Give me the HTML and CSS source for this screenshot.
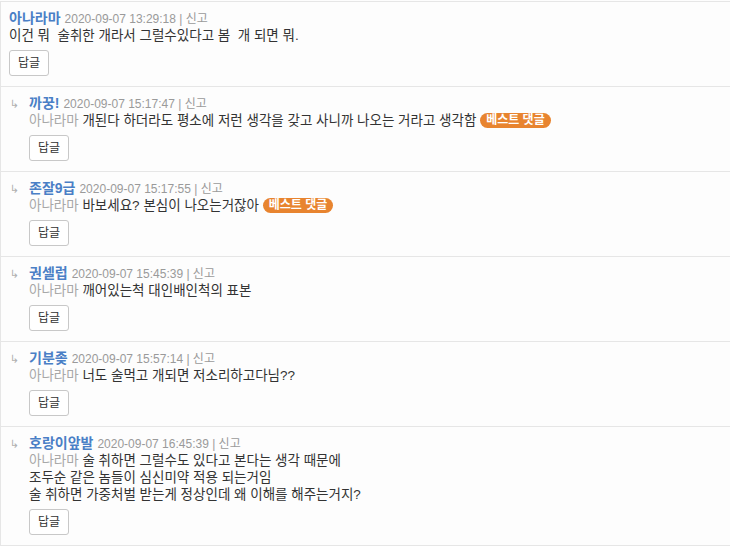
FILE: index.html
```html
<!DOCTYPE html>
<html lang="ko">
<head>
<meta charset="utf-8">
<title>댓글</title>
<link rel="stylesheet" href="styles.css">
</head>
<body>
<div class="comments">
  <div class="item">
    <div class="content">
      <div class="head"><span class="name">아나라마</span> <span class="meta">2020-09-07 13:29:18 | 신고</span></div>
      <div class="text">이건 뭐&nbsp; 술취한 개라서 그럴수있다고 봄&nbsp; 개 되면 뭐.</div>
      <button class="reply-btn">답글</button>
    </div>
  </div>
  <div class="item reply">
    <span class="arrow">↳</span>
    <div class="content">
      <div class="head"><span class="name">까꿍!</span> <span class="meta">2020-09-07 15:17:47 | 신고</span></div>
      <div class="text"><span class="to">아나라마</span> 개된다 하더라도 평소에 저런 생각을 갖고 사니까 나오는 거라고 생각함 <span class="badge">베스트 댓글</span></div>
      <button class="reply-btn">답글</button>
    </div>
  </div>
  <div class="item reply">
    <span class="arrow">↳</span>
    <div class="content">
      <div class="head"><span class="name">존잘9급</span> <span class="meta">2020-09-07 15:17:55 | 신고</span></div>
      <div class="text"><span class="to">아나라마</span> 바보세요? 본심이 나오는거잖아 <span class="badge">베스트 댓글</span></div>
      <button class="reply-btn">답글</button>
    </div>
  </div>
  <div class="item reply">
    <span class="arrow">↳</span>
    <div class="content">
      <div class="head"><span class="name">권셀럽</span> <span class="meta">2020-09-07 15:45:39 | 신고</span></div>
      <div class="text"><span class="to">아나라마</span> 깨어있는척 대인배인척의 표본</div>
      <button class="reply-btn">답글</button>
    </div>
  </div>
  <div class="item reply">
    <span class="arrow">↳</span>
    <div class="content">
      <div class="head"><span class="name">기분좆</span> <span class="meta">2020-09-07 15:57:14 | 신고</span></div>
      <div class="text"><span class="to">아나라마</span> 너도 술먹고 개되면 저소리하고다님??</div>
      <button class="reply-btn">답글</button>
    </div>
  </div>
  <div class="item reply">
    <span class="arrow">↳</span>
    <div class="content">
      <div class="head"><span class="name">호랑이앞발</span> <span class="meta">2020-09-07 16:45:39 | 신고</span></div>
      <div class="text"><span class="to">아나라마</span> 술 취하면 그럴수도 있다고 본다는 생각 때문에<br>조두순 같은 놈들이 심신미약 적용 되는거임<br>술 취하면 가중처벌 받는게 정상인데 왜 이해를 해주는거지?</div>
      <button class="reply-btn">답글</button>
    </div>
  </div>
</div>
</body>
</html>
```

FILE: styles.css
```css
html, body {
  margin: 0;
  padding: 0;
  background: #fdfdfd;
}
body {
  font-family: "Liberation Sans", "Noto Sans CJK KR", sans-serif;
  color: #333;
  font-size: 13px;
  line-height: 17px;
}
.comments {
  margin-top: 1px;
  border-top: 1px solid #e6e6e6;
  border-left: 1px solid #e6e6e6;
}
.item {
  display: flex;
  padding: 8px 0 10px 8px;
  border-bottom: 1px solid #e6e6e6;
}
.item.reply {
  padding-left: 9px;
}
.arrow {
  width: 19px;
  flex: none;
  height: 17px;
  overflow: hidden;
  color: #b0b0b0;
  font-size: 11px;
  line-height: 17px;
  padding-top: 1px;
  font-family: "DejaVu Sans", sans-serif;
}
.content {
  display: flex;
  flex-direction: column;
  align-items: flex-start;
}
.head {
  display: flex;
  align-items: baseline;
  gap: 4px;
  height: 17px;
  font-size: 12px;
  line-height: 17px;
  white-space: nowrap;
}
.name {
  color: #4a7fc6;
  font-weight: bold;
  font-size: 14px;
}
.meta {
  color: #9a9a9a;
}
.text {
  color: #333;
  font-size: 13.5px;
  line-height: 17px;
}
.to {
  color: #a8a8a8;
}
.badge {
  display: inline-block;
  background: #e8842f;
  color: #fff;
  font-weight: bold;
  font-size: 12px;
  line-height: 15px;
  padding: 0 6px;
  border-radius: 8px;
  vertical-align: 1px;
}
.reply-btn {
  margin-top: 6px;
  width: 40px;
  height: 26px;
  padding: 0;
  background: #fff;
  border: 1px solid #c8c8c8;
  border-radius: 3px;
  font-family: "Liberation Sans", "Noto Sans CJK KR", sans-serif;
  font-size: 12px;
  line-height: 24px;
  color: #333;
}
```
